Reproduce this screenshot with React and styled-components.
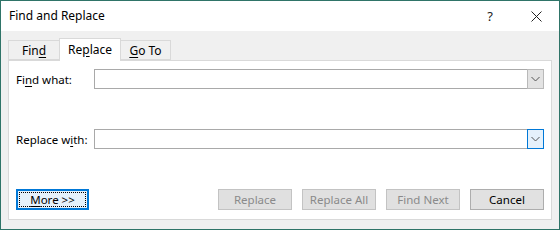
import React from "react";
import styled, { createGlobalStyle } from "styled-components";

const Global = createGlobalStyle`
  body {
    margin: 0;
    background: #ffffff;
    font-family: "Noto Sans", "Open Sans", sans-serif;
  }
`;

const Window = styled.div`
  width: 560px;
  height: 230px;
  box-sizing: border-box;
  border: 1px solid #2f7468;
  background: #f0f0f0;
  display: flex;
  flex-direction: column;
  font-size: 11.5px;
  color: #000;
`;

const TitleBar = styled.div`
  height: 30px;
  background: #ffffff;
  display: flex;
  align-items: center;
  padding-left: 8px;
  flex-shrink: 0;
`;

const Title = styled.div`
  flex: 1;
  font-size: 12px;
  margin-top: -1px;
`;

const TitleButton = styled.div`
  width: 46px;
  height: 30px;
  display: flex;
  align-items: center;
  justify-content: center;
  font-size: 13px;
  color: #222;
`;

const Body = styled.div`
  padding: 7px 7px 0 7px;
  display: flex;
  flex-direction: column;
`;

const TabRow = styled.div`
  display: flex;
  align-items: flex-end;
  height: 22px;
  position: relative;
  z-index: 1;
`;

const Tab = styled.div`
  box-sizing: border-box;
  width: ${(p) => p.$w}px;
  height: ${(p) => (p.$active ? 23 : 20)}px;
  margin-bottom: ${(p) => (p.$active ? -1 : 0)}px;
  background: ${(p) => (p.$active ? "#ffffff" : "#f0f0f0")};
  border: 1px solid #d9d9d9;
  border-bottom: ${(p) => (p.$active ? "none" : "1px solid #d9d9d9")};
  margin-left: ${(p) => (p.$first ? 0 : -1)}px;
  display: flex;
  align-items: center;
  justify-content: center;
  padding-bottom: ${(p) => (p.$active ? 2 : 0)}px;
  font-size: 12px;
`;

const Panel = styled.div`
  box-sizing: border-box;
  width: 544px;
  height: 160px;
  background: #ffffff;
  border: 1px solid #d9d9d9;
  padding: 8px 7px 0 7px;
  display: flex;
  flex-direction: column;
`;

const FieldRow = styled.div`
  display: flex;
  align-items: center;
  height: 20px;
  margin-bottom: ${(p) => p.$gap || 0}px;
`;

const Label = styled.div`
  width: 78px;
  flex-shrink: 0;
`;

const Combo = styled.div`
  flex: 1;
  height: 20px;
  box-sizing: border-box;
  border: 1px solid #a9a9a9;
  display: flex;
  justify-content: flex-end;
  align-items: stretch;
  background: #fff;
`;

const DropButton = styled.div`
  width: 17px;
  box-sizing: border-box;
  margin: -1px -1px -1px 0;
  border: 1px solid ${(p) => (p.$hot ? "#0078d7" : "#b9b9b9")};
  background: ${(p) => (p.$hot ? "#e5f1fb" : "#e3e3e3")};
  display: flex;
  align-items: center;
  justify-content: center;
`;

const ButtonRow = styled.div`
  display: flex;
  align-items: center;
  margin-top: 40px;
`;

const Spacer = styled.div`
  flex: 1;
`;

const Button = styled.div`
  box-sizing: border-box;
  width: 74px;
  height: 21px;
  display: flex;
  align-items: center;
  justify-content: center;
  margin-left: ${(p) => (p.$first ? 0 : 10)}px;
  background: ${(p) => (p.$disabled ? "#e0e0e0" : "#e1e1e1")};
  border: 1px solid ${(p) => (p.$disabled ? "#c3c3c3" : "#adadad")};
  color: ${(p) => (p.$disabled ? "#8a8a8a" : "#000")};
`;

const FocusButton = styled.div`
  box-sizing: border-box;
  width: 73px;
  height: 21px;
  border: 2px solid #0078d7;
  background: #e5f1fb;
  padding: 1px;
  display: flex;
`;

const FocusInner = styled.div`
  flex: 1;
  border: 1px dotted #000;
  display: flex;
  align-items: center;
  justify-content: center;
`;

const Key = styled.span`
  text-decoration: underline;
  text-underline-offset: 2px;
`;

const Chevron = () => (
  <svg width="9" height="6" viewBox="0 0 9 6">
    <path d="M0.5 1 L4.5 5 L8.5 1" fill="none" stroke="#555" strokeWidth="1" />
  </svg>
);

const CloseIcon = () => (
  <svg width="11" height="11" viewBox="0 0 11 11">
    <path d="M0.5 0.5 L10.5 10.5 M10.5 0.5 L0.5 10.5" stroke="#222" strokeWidth="1" />
  </svg>
);

export default function App() {
  return (
    <>
      <Global />
      <Window>
        <TitleBar>
          <Title>Find and Replace</Title>
          <TitleButton>?</TitleButton>
          <TitleButton>
            <CloseIcon />
          </TitleButton>
        </TitleBar>
        <Body>
          <TabRow>
            <Tab $first $w={52}>
              Fin<Key>d</Key>
            </Tab>
            <Tab $active $w={62}>
              Re<Key>p</Key>lace
            </Tab>
            <Tab $w={51}>
              <Key>G</Key>o To
            </Tab>
          </TabRow>
          <Panel>
            <FieldRow $gap={40}>
              <Label>
                Fi<Key>n</Key>d what:
              </Label>
              <Combo>
                <DropButton>
                  <Chevron />
                </DropButton>
              </Combo>
            </FieldRow>
            <FieldRow>
              <Label>
                Replace w<Key>i</Key>th:
              </Label>
              <Combo>
                <DropButton $hot>
                  <Chevron />
                </DropButton>
              </Combo>
            </FieldRow>
            <ButtonRow>
              <FocusButton>
                <FocusInner>
                  <Key>M</Key>ore &gt;&gt;
                </FocusInner>
              </FocusButton>
              <Spacer />
              <Button $first $disabled>Replace</Button>
              <Button $disabled>Replace All</Button>
              <Button $disabled>Find Next</Button>
              <Button>Cancel</Button>
            </ButtonRow>
          </Panel>
        </Body>
      </Window>
    </>
  );
}
